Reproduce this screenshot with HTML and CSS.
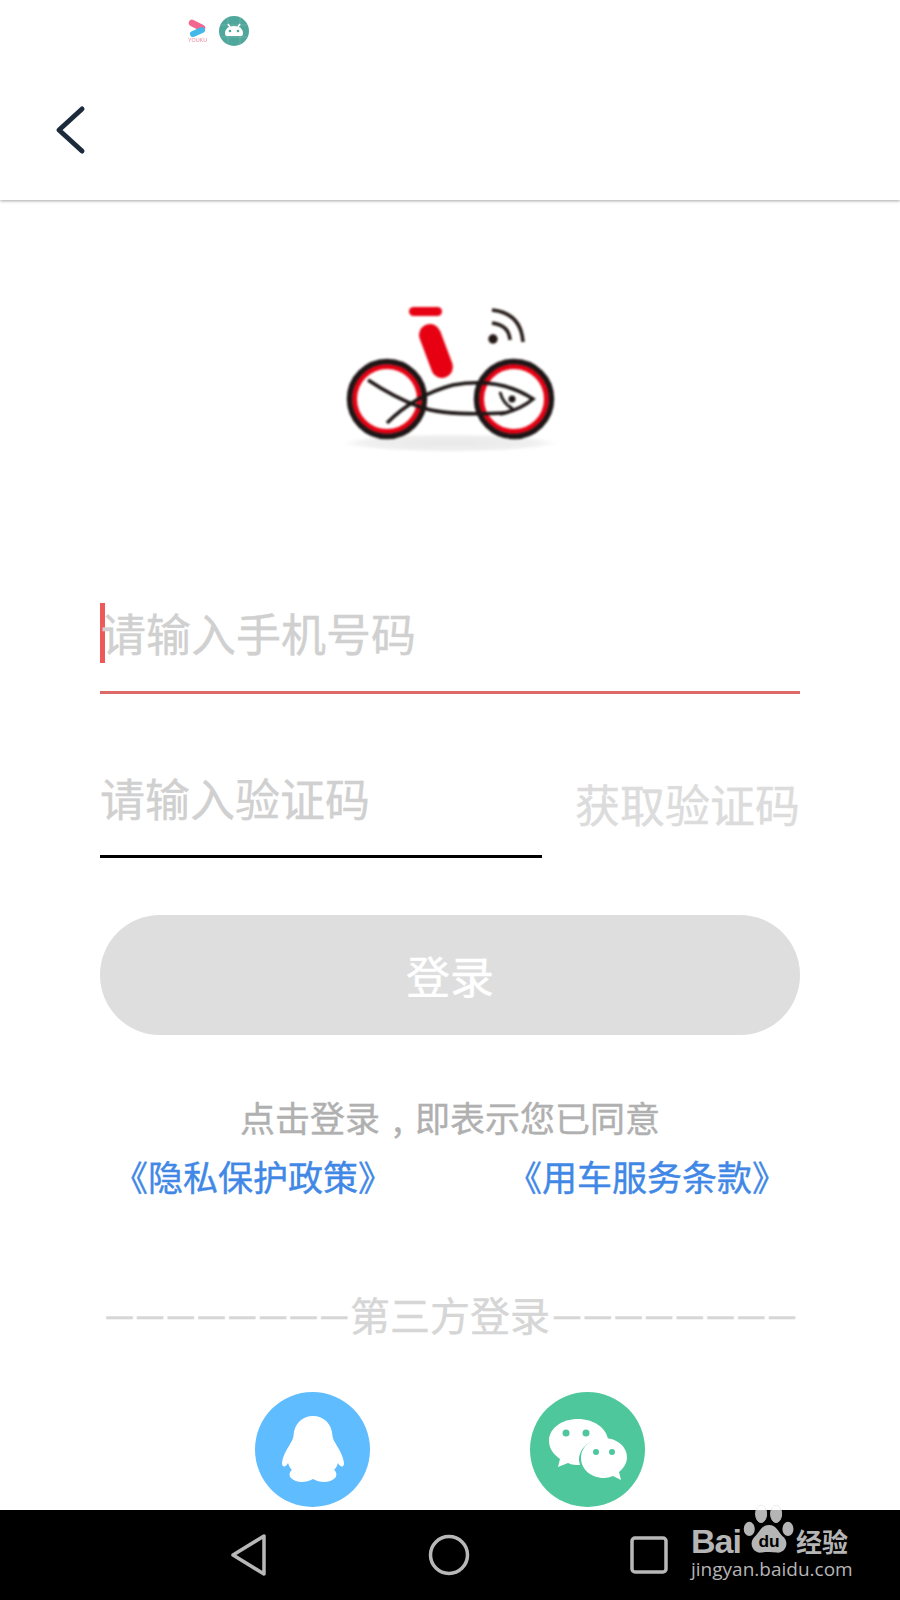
FILE: index.html
```html
<!DOCTYPE html>
<html lang="zh-CN">
<head>
    <meta charset="UTF-8">
    <meta name="viewport" content="width=device-width, initial-scale=1.0">
    <title>登录</title>
    <link rel="stylesheet" href="styles.css">
</head>
<body>
    <div class="screen">
        <div class="status-bar">
            <svg class="status-icon" width="24" height="26" viewBox="0 0 24 26">
                <path d="M6 5 L16 10" fill="none" stroke="#f2668f" stroke-width="6.5" stroke-linecap="round"/>
                <path d="M16 12 L7 16" fill="none" stroke="#45b8ea" stroke-width="6" stroke-linecap="round"/>
                <text x="11.5" y="24" class="youku-text">YOUKU</text>
            </svg>
            <svg class="status-icon" width="30" height="30" viewBox="0 0 30 30">
                <circle cx="15" cy="15" r="15" fill="#4fa69b"/>
                <path d="M9 0 V30 M21 0 V30 M0 9 H30 M0 21 H30" stroke="#fff" stroke-opacity="0.15" stroke-width="1"/>
                <path d="M6 18 Q6 10 15 10 Q24 10 24 18 Q24 20 22 20 L8 20 Q6 20 6 18 Z" fill="#fff"/>
                <path d="M9 8 L11 11 M21 8 L19 11" stroke="#fff" stroke-width="1.4"/>
                <circle cx="11" cy="15" r="1.3" fill="#4fa69b"/>
                <circle cx="19" cy="15" r="1.3" fill="#4fa69b"/>
            </svg>
        </div>

        <header class="toolbar">
            <svg class="back-icon" width="34" height="50" viewBox="0 0 34 50">
                <path d="M28 4 L5 25 L28 46" fill="none" stroke="#1c2b3c" stroke-width="5" stroke-linecap="round" stroke-linejoin="round"/>
            </svg>
        </header>

        <main class="content">
            <div class="logo">
                <svg width="260" height="180" viewBox="0 0 260 180">
                    <defs>
                        <radialGradient id="ground">
                            <stop offset="0" stop-color="#e8e8e8"/>
                            <stop offset="0.8" stop-color="#f0f0f0"/>
                            <stop offset="1" stop-color="#fff"/>
                        </radialGradient>
                    </defs>
                    <ellipse cx="130" cy="163" rx="108" ry="9" fill="url(#ground)"/>
                    <rect x="89" y="27" width="33" height="9" rx="4.5" fill="#e60012"/>
                    <line x1="110" y1="55" x2="122" y2="87" stroke="#e60012" stroke-width="22" stroke-linecap="round"/>
                    <circle cx="67" cy="119" r="32.5" fill="#fff" stroke="#e60012" stroke-width="5"/>
                    <circle cx="67" cy="119" r="37.5" fill="none" stroke="#1d1515" stroke-width="5.5"/>
                    <circle cx="194" cy="119" r="32.5" fill="#fff" stroke="#e60012" stroke-width="5"/>
                    <circle cx="194" cy="119" r="37.5" fill="none" stroke="#1d1515" stroke-width="5.5"/>
                    <path d="M48 100 Q75 118 100 127 Q125 136 185 133" fill="none" stroke="#1d1515" stroke-width="3.5"/>
                    <path d="M67 143 Q95 115 133 105 Q180 97 213 119 Q200 130 180 134" fill="none" stroke="#1d1515" stroke-width="3.5"/>
                    <path d="M180 112 Q183 124 193 129" fill="none" stroke="#1d1515" stroke-width="3"/>
                    <circle cx="192" cy="119" r="3.5" fill="#1d1515"/>
                    <circle cx="173" cy="59" r="4.7" fill="#231815"/>
                    <path d="M172 43 Q189 45 190 60" fill="none" stroke="#231815" stroke-width="3.5"/>
                    <path d="M172 30 Q201 33 203 62" fill="none" stroke="#231815" stroke-width="3.5"/>
                </svg>
            </div>

            <div class="field field-phone">
                <span class="caret"></span>
                <span class="placeholder">请输入手机号码</span>
            </div>

            <div class="code-row">
                <div class="field field-code">
                    <span class="placeholder">请输入验证码</span>
                </div>
                <span class="get-code">获取验证码</span>
            </div>

            <button class="login-btn">登录</button>

            <p class="agree">点击登录<span class="comma">,</span>即表示您已同意</p>
            <div class="links">
                <a class="link">《隐私保护政策》</a>
                <a class="link">《用车服务条款》</a>
            </div>

            <div class="third-title">
                <span class="dashes">————————</span>第三方登录<span class="dashes dashes-right">————————</span>
            </div>

            <div class="third-icons">
                <span class="third-btn qq">
                    <svg width="62" height="67" viewBox="0 0 62 67">
                        <path d="M31 0 C42 0 50 8 50.5 20 C51 24 53 26 55 30 C59 36 62 43 62 48 C61 52 58 51 56 47 C55 50 54 52 52 54 C55 56 55 60 53 62 C48 67 38 67 31 63 C24 67 14 67 9 62 C7 60 7 56 10 54 C8 52 7 50 6 47 C4 51 1 52 0 48 C0 43 3 36 7 30 C9 26 11 24 11.5 20 C12 8 20 0 31 0 Z" fill="#fff"/>
                    </svg>
                </span>
                <span class="third-btn wechat">
                    <svg width="80" height="64" viewBox="0 0 80 64">
                        <path d="M30 1 C46 1 58 10 60 21 C44 19 31 29 31 42 C31 44 32 46 32 47 C28 47 24 47 20 45 L10 49 L12 41 C5 36 1 30 1 23 C1 10 14 1 30 1 Z" fill="#fff"/>
                        <path d="M56 20 C69 20 79 29 79 39 C79 45 76 50 71 54 L73 62 L65 58 C62 59 59 60 56 60 C43 60 33 51 33 40 C33 29 43 20 56 20 Z" fill="#fff"/>
                        <circle cx="18" cy="15" r="3.5" fill="#4fc79c"/>
                        <circle cx="38" cy="15" r="3.5" fill="#4fc79c"/>
                        <circle cx="48" cy="34" r="3" fill="#4fc79c"/>
                        <circle cx="64" cy="34" r="3" fill="#4fc79c"/>
                    </svg>
                </span>
            </div>
        </main>

        <nav class="nav-bar">
            <svg class="nav-back" width="38" height="44" viewBox="0 0 38 44">
                <path d="M34 3 L34 41 L3 22 Z" fill="none" stroke="#b8b8b8" stroke-width="3.5" stroke-linejoin="round"/>
            </svg>
            <svg class="nav-home" width="42" height="42" viewBox="0 0 42 42">
                <circle cx="21" cy="21" r="18.5" fill="none" stroke="#b8b8b8" stroke-width="3.5"/>
            </svg>
            <svg class="nav-recent" width="38" height="38" viewBox="0 0 38 38">
                <rect x="2" y="2" width="34" height="34" rx="3" fill="none" stroke="#b8b8b8" stroke-width="3.5"/>
            </svg>
            <div class="watermark">
                <svg class="paw" width="60" height="53" viewBox="0 0 76 66">
                    <defs>
                        <clipPath id="on-bar">
                            <rect x="0" y="7" width="76" height="60"/>
                        </clipPath>
                    </defs>
                    <ellipse cx="28" cy="12" rx="7" ry="11" fill="none" stroke="#e4e4e4"/>
                    <ellipse cx="47" cy="12" rx="7" ry="11" fill="none" stroke="#e4e4e4"/>
                    <g clip-path="url(#on-bar)">
                        <ellipse cx="28" cy="12" rx="7" ry="11" fill="#b5b5b5"/>
                        <ellipse cx="47" cy="12" rx="7" ry="11" fill="#b5b5b5"/>
                    </g>
                    <ellipse cx="13" cy="31" rx="7" ry="9" fill="#b5b5b5"/>
                    <ellipse cx="62" cy="31" rx="7" ry="9" fill="#b5b5b5"/>
                    <path d="M38 26 C48 26 50 36 57 42 C64 50 58 62 48 61 C42 60 34 60 28 61 C18 62 12 50 19 42 C26 36 28 26 38 26 Z" fill="#b5b5b5"/>
                    <text x="38" y="54" class="paw-text">du</text>
                </svg>
                <div class="wm-top"><span class="wm-bai">Bai</span><span class="wm-jy">经验</span></div>
                <div class="wm-url">jingyan.baidu.com</div>
            </div>
        </nav>
    </div>
</body>
</html>
```

FILE: styles.css
```css
* {
    box-sizing: border-box;
}

html,
body {
    margin: 0;
    padding: 0;
}

body {
    background: #fff;
    font-family: "Noto Sans CJK SC", "Noto Sans", sans-serif;
}

.screen {
    width: 900px;
    height: 1600px;
    display: flex;
    flex-direction: column;
    overflow: hidden;
}

.status-bar {
    height: 60px;
    padding-left: 186px;
    padding-top: 2px;
    display: flex;
    align-items: center;
    gap: 9px;
    flex-shrink: 0;
}

.status-icon {
    filter: blur(0.4px);
}

.youku-text {
    font-family: "Liberation Sans", sans-serif;
    font-size: 5.4px;
    fill: #e9869f;
    text-anchor: middle;
}

.toolbar {
    height: 140px;
    padding-left: 54px;
    padding-top: 45px;
    flex-shrink: 0;
    box-shadow: 0 1px 3px rgba(0, 0, 0, 0.35);
    clip-path: inset(0 0 -6px 0);
}

.back-icon {
    display: block;
}

.content {
    flex: 1;
    padding: 80px 100px 0;
    min-height: 0;
    -webkit-text-stroke: 0.4px;
}

.logo {
    margin: 0 -100px;
    height: 180px;
    display: flex;
    justify-content: center;
}

.logo svg {
    filter: blur(0.8px);
}

.placeholder {
    font-size: 45px;
    color: #d0d0d0;
    line-height: 60px;
}

.field {
    display: flex;
    align-items: center;
}

.field-phone {
    margin-top: 143px;
    height: 91px;
    padding-bottom: 28px;
    border-bottom: 3px solid #dc6868;
}

.caret {
    width: 5px;
    height: 60px;
    background: #ee5a5a;
    margin-right: -4px;
}

.code-row {
    margin-top: 73px;
    display: flex;
    justify-content: space-between;
    align-items: flex-start;
}

.field-code {
    width: 442px;
    height: 91px;
    padding-bottom: 27px;
    border-bottom: 3px solid #000;
}

.get-code {
    font-size: 45px;
    line-height: 60px;
    color: #dcdcdc;
    margin-top: 7px;
}

.login-btn {
    display: block;
    width: 100%;
    height: 120px;
    margin-top: 57px;
    border: none;
    border-radius: 60px;
    background: #dedede;
    color: #fff;
    font-family: inherit;
    font-size: 44px;
    -webkit-text-stroke: 0.4px;
}

.agree {
    margin: 60px 0 0;
    font-size: 35px;
    line-height: 44px;
    color: #b0b0b0;
    text-align: center;
}

.comma {
    display: inline-block;
    width: 35px;
    text-align: center;
}

.links {
    margin-top: 13px;
    display: flex;
    justify-content: space-between;
    padding: 0 13px;
}

.link {
    font-size: 35px;
    line-height: 48px;
    color: #4188e6;
}

.third-title {
    margin-top: 87px;
    font-size: 40px;
    line-height: 54px;
    color: #d6d6d6;
    text-align: center;
    white-space: nowrap;
}

.dashes {
    font-family: "Liberation Sans", sans-serif;
    font-size: 26px;
    font-weight: 700;
    line-height: 1;
    vertical-align: 6px;
    letter-spacing: 4.7px;
    margin-right: -2px;
}

.dashes-right {
    margin-left: 4px;
    margin-right: -6px;
}

.third-icons {
    margin-top: 51px;
    padding-left: 155px;
    display: flex;
    gap: 160px;
}

.third-btn {
    width: 115px;
    height: 115px;
    border-radius: 50%;
    display: flex;
    align-items: center;
    justify-content: center;
    flex-shrink: 0;
}

.qq {
    background: #5fbcff;
}

.wechat {
    background: #4fc79c;
}

.nav-bar {
    height: 90px;
    background: #000;
    flex-shrink: 0;
    position: relative;
    display: flex;
    align-items: center;
    padding-left: 230px;
}

.nav-home {
    margin-left: 160px;
}

.nav-recent {
    margin-left: 160px;
}

/* sits over the bar, top toes stick out over the page */
.watermark {
    position: absolute;
    left: 691px;
    top: -8px;
    width: 160px;
    color: #b5b5b5;
}

.paw {
    position: absolute;
    left: 48px;
    top: 2px;
}

.paw-text {
    font-family: "Liberation Sans", sans-serif;
    font-size: 22px;
    font-weight: bold;
    fill: #000;
    text-anchor: middle;
}

.wm-top {
    margin-top: 23px;
    display: flex;
    justify-content: space-between;
    align-items: center;
    height: 32px;
}

.wm-bai {
    font-family: "Liberation Sans", sans-serif;
    font-size: 34px;
    font-weight: bold;
    letter-spacing: -1px;
    line-height: 1;
}

.wm-jy {
    font-size: 26px;
    font-weight: bold;
    line-height: 1;
    margin-right: 3px;
}

.wm-url {
    font-family: "Open Sans", sans-serif;
    font-size: 19px;
    line-height: 26px;
    margin-top: -1px;
    white-space: nowrap;
}
```
